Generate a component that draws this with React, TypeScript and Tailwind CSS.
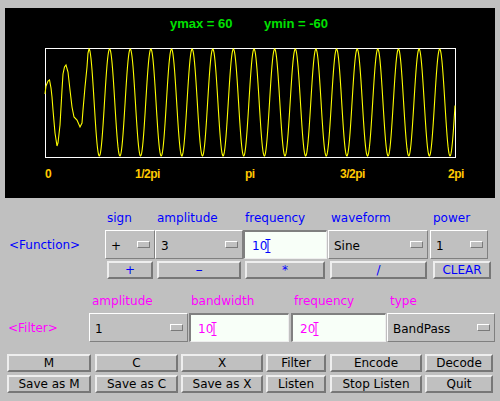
import React from "react";

const trans: [number, number][] = [
  [45, 94], [46, 86], [48, 81], [49.5, 80], [51, 88], [52, 97], [53, 110], [55, 133], [57, 146],
  [58, 143], [60, 125], [62, 90], [63, 74], [64.5, 67], [66, 65], [68, 72], [70, 90], [72, 107],
  [74, 117], [77, 120], [80, 127], [82, 123], [83, 110], [85, 87], [87, 67], [88, 53], [89, 49],
];
const pts: [number, number][] = [...trans];
for (let x = 89.5; x <= 455; x += 0.5) {
  const y = 102.5 - 53.5 * Math.cos((2 * Math.PI * (x - 89)) / 20.63);
  pts.push([x, y]);
}
const wave = pts.map(([x, y]) => `${x},${y.toFixed(2)}`).join(" ");

function Indicator() {
  return (
    <span className="w-[13px] h-[7px] shrink-0 border-t border-l border-t-white border-l-white border-b border-r border-b-[#7a7a7a] border-r-[#7a7a7a] bg-[#c0c0c0]" />
  );
}

function Choice({ w, text }: { w: string; text: string }) {
  return (
    <div
      className={`${w} h-[29px] shrink-0 flex items-center justify-between pl-[5px] pr-[4px] border border-t-white border-l-white border-b-[#808080] border-r-[#808080] text-black text-[12px] leading-[14px]`}
    >
      <span className="pt-[3px]">{text}</span>
      <Indicator />
    </div>
  );
}

function Caret({ color }: { color: string }) {
  return (
    <svg width="6" height="14" viewBox="0 0 6 14" className="ml-[-2px] mt-[2px]">
      <path d="M0.5 0.5H5.5M3 0.5V13.5M0.5 13.5H5.5" stroke={color} strokeWidth="1" fill="none" />
    </svg>
  );
}

function TextField({ w, text, color, caret }: { w: string; text: string; color: string; caret: string }) {
  return (
    <div
      className={`${w} h-[29px] shrink-0 flex items-center pl-[7px] border-t-2 border-l-2 border-t-[#808080] border-l-[#808080] border-b border-r border-b-[#eeeeee] border-r-[#eeeeee] bg-[#f8fff8] text-[12px] leading-[14px] ${color}`}
    >
      <span className="pt-[2px]">{text}</span>
      <Caret color={caret} />
    </div>
  );
}

function Btn({ cls, children, color }: { cls: string; children: React.ReactNode; color: string }) {
  return (
    <div
      className={`${cls} h-[18px] shrink-0 flex items-center justify-center border-t-2 border-l-2 border-t-[#eeeeee] border-l-[#eeeeee] border-b-2 border-r-2 border-b-[#777777] border-r-[#777777] bg-[#c0c0c0] text-[12px] leading-[14px] ${color}`}
    >
      {children}
    </div>
  );
}

export default function App() {
  return (
    <div className="w-[500px] h-[401px] bg-[#c0c0c0] overflow-hidden font-['DejaVu_Sans',sans-serif] flex flex-col">
      <div className="ml-[5px] mt-[8px] w-[490px] h-[190px] bg-black shrink-0">
        <svg width="490" height="190" viewBox="5 8 490 190">
          <text x="170" y="28" fill="#00e000" fontFamily="'Liberation Sans', Arial, sans-serif" fontWeight="bold" fontSize="13">
            ymax = 60
          </text>
          <text x="264" y="28" fill="#00e000" fontFamily="'Liberation Sans', Arial, sans-serif" fontWeight="bold" fontSize="13">
            ymin = -60
          </text>
          <rect x="45.5" y="48.5" width="410" height="109" fill="none" stroke="#ffffff" strokeWidth="1" />
          <polyline points={wave} fill="none" stroke="#ffff00" strokeWidth="1.1" />
          <g fill="#ffc800" fontFamily="'Liberation Sans', Arial, sans-serif" fontWeight="bold" fontSize="12" letterSpacing="-0.5">
            <text x="45" y="178">0</text>
            <text x="135" y="178">1/2pi</text>
            <text x="245" y="178">pi</text>
            <text x="340" y="178">3/2pi</text>
            <text x="448" y="178">2pi</text>
          </g>
        </svg>
      </div>

      {/* function labels */}
      <div className="mt-[13px] h-[14px] flex text-[12px] leading-[14px] text-[#0000ff] shrink-0">
        <div className="w-[105px]" />
        <div className="w-[50px] pl-[2px]">sign</div>
        <div className="w-[88px] pl-[2px]">amplitude</div>
        <div className="w-[85px] pl-[2px]">frequency</div>
        <div className="w-[102px] pl-[3px]">waveform</div>
        <div className="pl-[3px]">power</div>
      </div>

      {/* function controls */}
      <div className="mt-[5px] h-[29px] flex items-center shrink-0">
        <div className="w-[105px] shrink-0 pl-[9px] text-[12px] leading-[14px] text-[#0000ff]">&lt;Function&gt;</div>
        <Choice w="w-[50px]" text="+" />
        <Choice w="w-[88px]" text="3" />
        <TextField w="w-[84px]" text="10" color="text-[#0000ff]" caret="#0000ff" />
        <div className="w-[1px] shrink-0" />
        <Choice w="w-[100px]" text="Sine" />
        <div className="w-[2px] shrink-0" />
        <Choice w="w-[58px]" text="1" />
      </div>

      {/* function buttons */}
      <div className="mt-[2px] h-[18px] flex shrink-0">
        <Btn cls="ml-[107px] w-[46px]" color="text-[#0000ff]">+</Btn>
        <Btn cls="ml-[4px] w-[84px]" color="text-[#0000ff]">
          <span className="inline-block scale-x-[1.8]">-</span>
        </Btn>
        <Btn cls="ml-[4px] w-[80px]" color="text-[#0000ff]">*</Btn>
        <Btn cls="ml-[5px] w-[97px]" color="text-[#0000ff]">/</Btn>
        <Btn cls="ml-[6px] w-[58px]" color="text-[#0000ff]">CLEAR</Btn>
      </div>

      {/* filter labels */}
      <div className="mt-[15px] h-[14px] flex text-[12px] leading-[14px] text-[#ff00ff] shrink-0">
        <div className="w-[89px]" />
        <div className="w-[100px] pl-[3px]">amplitude</div>
        <div className="w-[102px] pl-[2px]">bandwidth</div>
        <div className="w-[96px] pl-[3px]">frequency</div>
        <div className="pl-[3px]">type</div>
      </div>

      {/* filter controls */}
      <div className="mt-[5px] h-[29px] flex items-center shrink-0">
        <div className="w-[89px] shrink-0 pl-[8px] text-[12px] leading-[14px] text-[#ff00ff]">&lt;Filter&gt;</div>
        <Choice w="w-[99px]" text="1" />
        <div className="w-[1px] shrink-0" />
        <TextField w="w-[100px]" text="10" color="text-[#ff00ff]" caret="#ff00ff" />
        <div className="w-[2px] shrink-0" />
        <TextField w="w-[95px]" text="20" color="text-[#ff00ff]" caret="#ff00ff" />
        <div className="w-[1px] shrink-0" />
        <Choice w="w-[108px]" text="BandPass" />
      </div>

      {/* bottom buttons */}
      <div className="mt-[12px] h-[18px] flex shrink-0">
        <Btn cls="ml-[7px] w-[84px]" color="text-black">M</Btn>
        <Btn cls="ml-[4px] w-[83px]" color="text-black">C</Btn>
        <Btn cls="ml-[3px] w-[82px]" color="text-black">X</Btn>
        <Btn cls="ml-[3px] w-[60px]" color="text-black">Filter</Btn>
        <Btn cls="ml-[4px] w-[92px]" color="text-black">Encode</Btn>
        <Btn cls="ml-[3px] w-[68px]" color="text-black">Decode</Btn>
      </div>
      <div className="mt-[3px] h-[18px] flex shrink-0">
        <Btn cls="ml-[7px] w-[84px]" color="text-black">Save as M</Btn>
        <Btn cls="ml-[4px] w-[83px]" color="text-black">Save as C</Btn>
        <Btn cls="ml-[3px] w-[82px]" color="text-black">Save as X</Btn>
        <Btn cls="ml-[3px] w-[60px]" color="text-black">Listen</Btn>
        <Btn cls="ml-[4px] w-[92px]" color="text-black">Stop Listen</Btn>
        <Btn cls="ml-[3px] w-[68px]" color="text-black">Quit</Btn>
      </div>
    </div>
  );
}
